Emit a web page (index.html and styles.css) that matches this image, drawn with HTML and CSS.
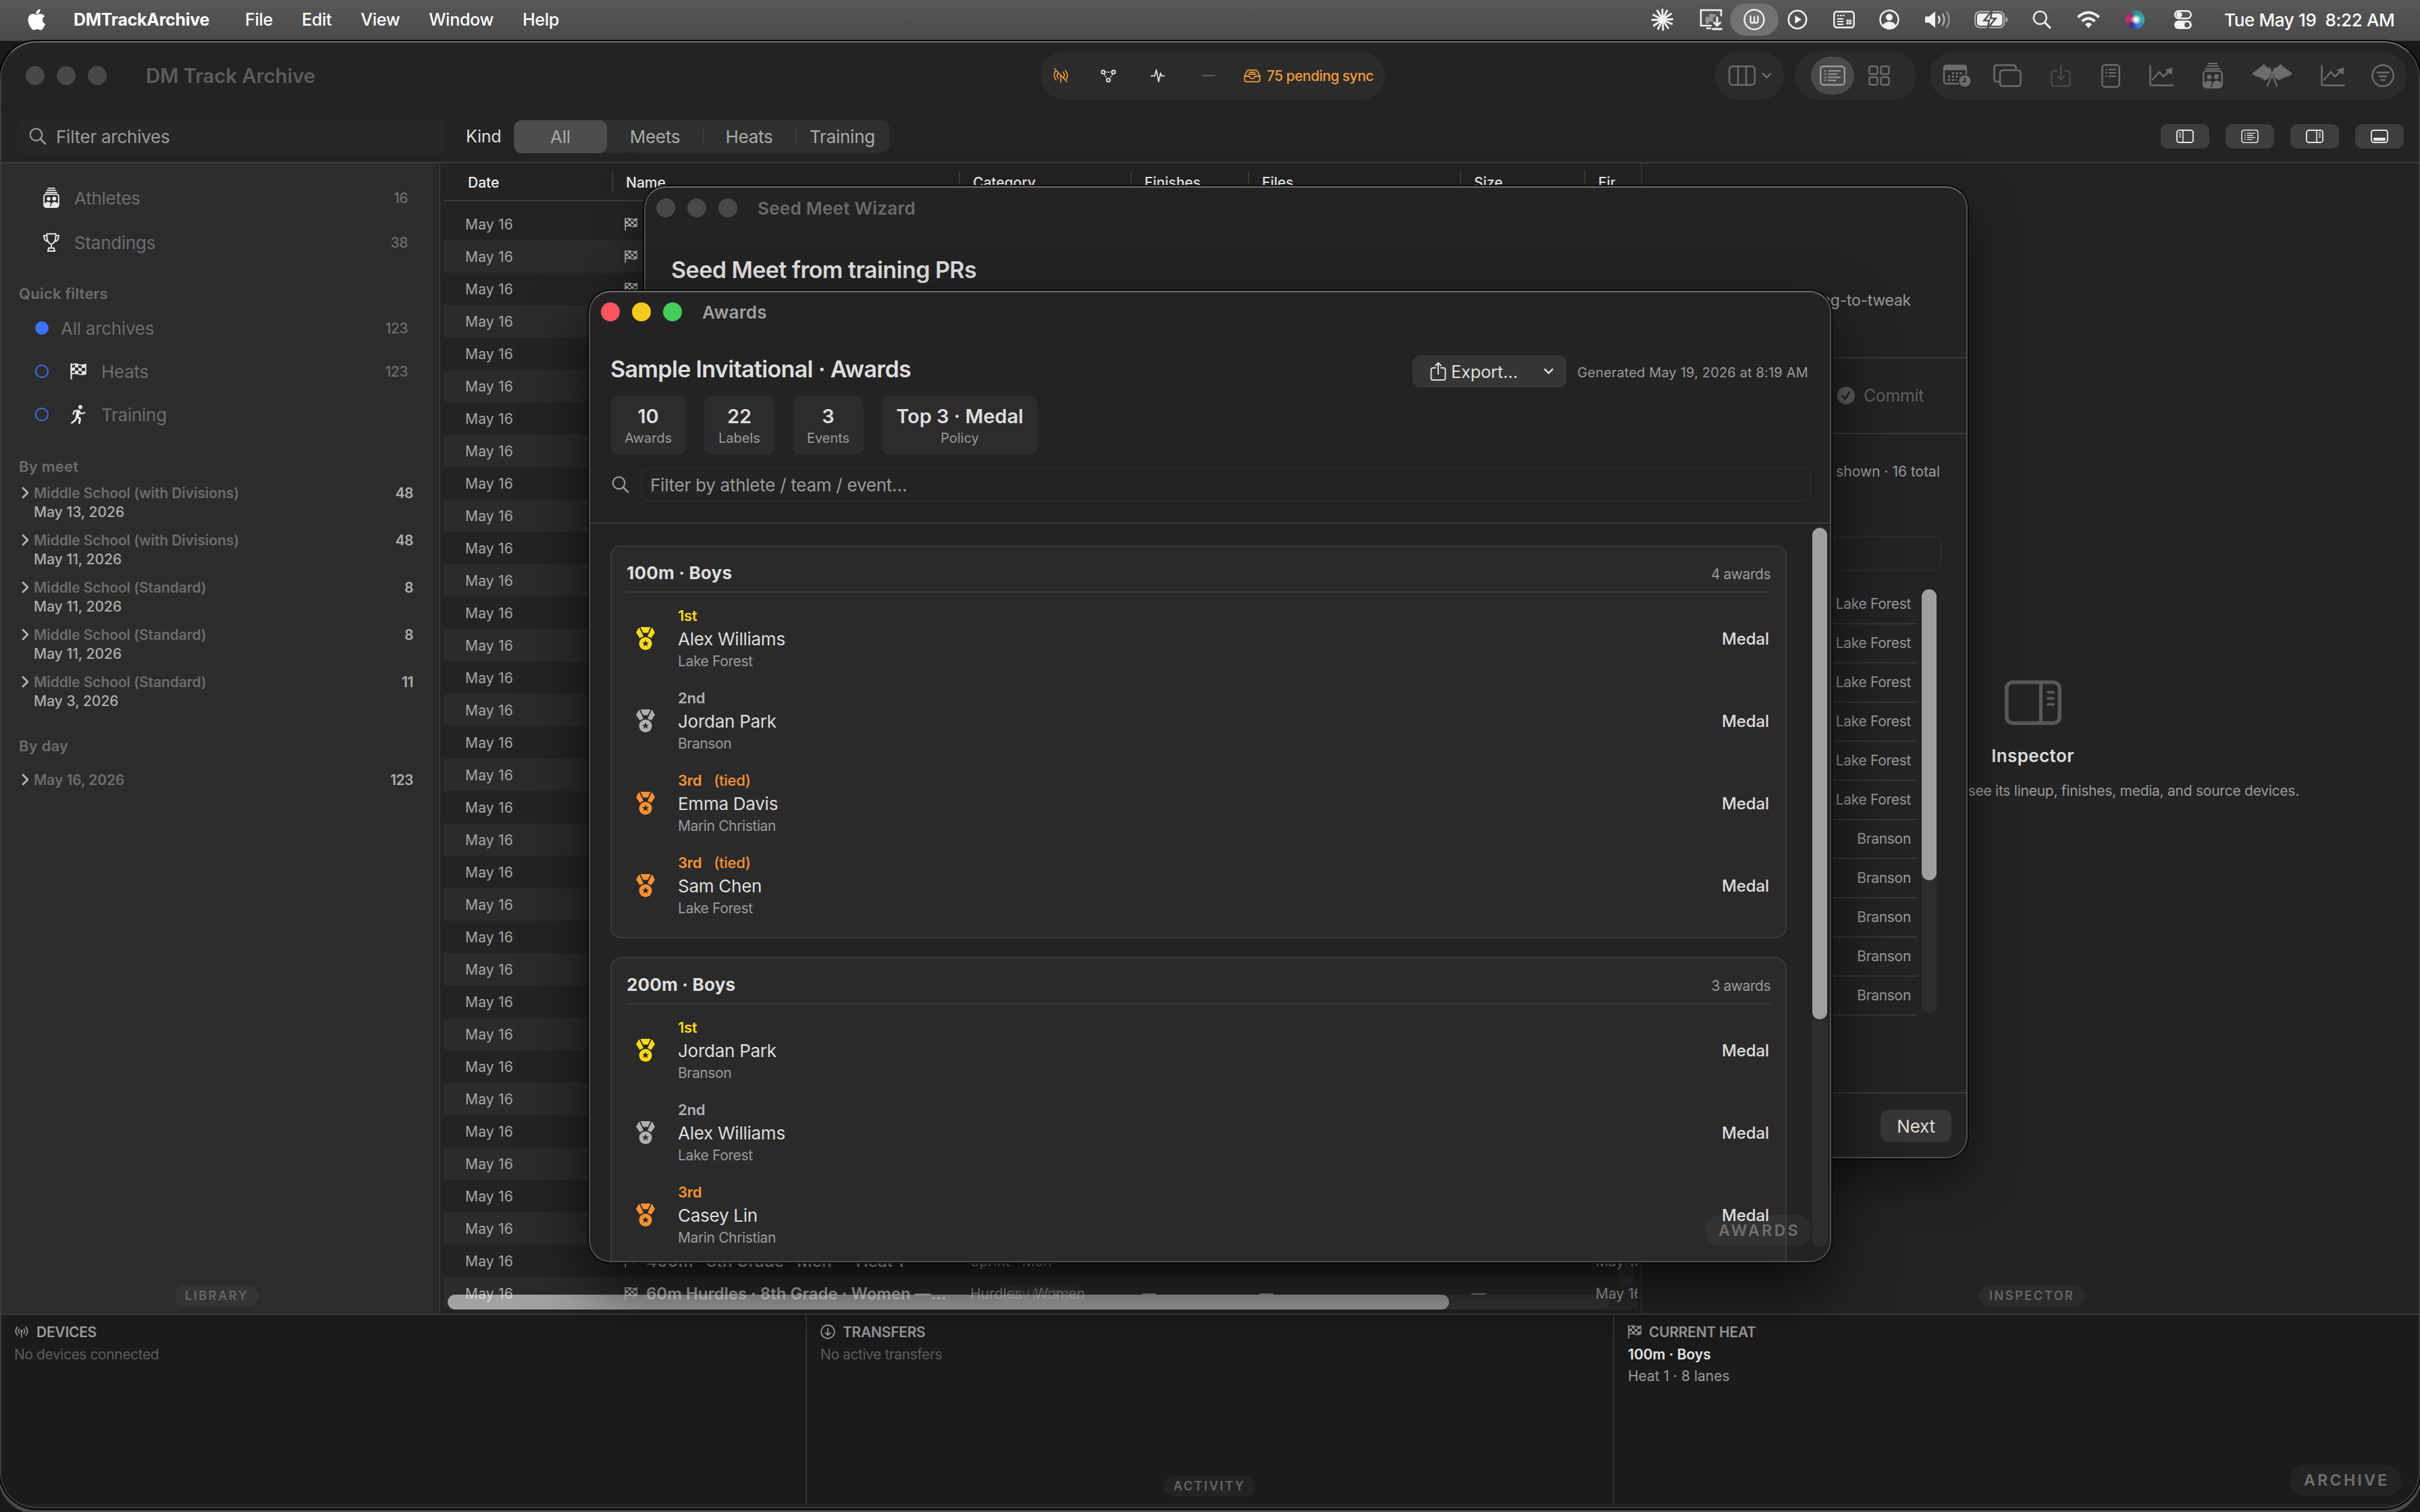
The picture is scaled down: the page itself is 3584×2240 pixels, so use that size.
FILE: index.html
```html
<!DOCTYPE html>
<html lang="en">
	<head>
		<meta charset="utf-8">
		<title>DM Track Archive</title>
		<link rel="stylesheet" href="styles.css">
	</head>
	<body>
		<svg class="defs" xmlns="http://www.w3.org/2000/svg">
			<symbol id="apple" viewBox="0 0 26 32"><path d="M18 0.5c.3 2.3-.6 4.200-1.700 5.500-1.100 1.300-2.800 2.200-4.500 2-.3-2 .6-4 1.700-5.200C14.700 1.500 16.500.6 18 .5zM24.700 11c-2 1.200-3.200 3-3.200 5.400 0 2.700 1.600 5 4.200 6-.6 1.900-1.600 3.800-2.800 5.500-1.200 1.700-2.500 3.600-4.500 3.600s-2.600-1.200-4.900-1.200c-2.200 0-3 1.200-4.900 1.200s-3.200-1.700-4.600-3.700C1.700 24.600 0 20 0 16.500c0-5.800 3.800-8.900 7.500-8.900 2 0 3.600 1.300 4.900 1.300 1.200 0 3.100-1.400 5.500-1.400 2.600 0 5.100 1.100 6.800 3.500z" fill="currentColor"/></symbol>
			<symbol id="burst" viewBox="0 0 32 32"><g stroke="currentColor" stroke-width="2.700" stroke-linecap="round"><path d="M16 16V2M16 16L22.500 3.500M16 16L28 8M16 16L30 15.500M16 16L29 22M16 16L24 28M16 16L17 30.500M16 16L10 29M16 16L4 24.500M16 16L1.800 16.500M16 16L3.500 9.500M16 16L9 3.500"/></g></symbol>
			<symbol id="display" viewBox="0 0 34 32"><g fill="none" stroke="currentColor" stroke-width="2.600" stroke-linecap="round"><path d="M32 10V2H2v23h15M11 29h5"/><path d="M26 13v11M21.500 20.500l4.500 4.500 4.500-4.500M19.500 30h13" stroke-width="3"/></g><path d="M9 12h5V8h10v4h-4v7h-6v3H9z" fill="currentColor" opacity=".4"/></symbol>
			<symbol id="wcircle" viewBox="0 0 32 32"><g fill="none" stroke="currentColor" stroke-width="2.400" stroke-linecap="round" stroke-linejoin="round"><circle cx="16" cy="16" r="14.500"/><path d="M10.500 11v7.500q0 2.500 2.700 2.500t2.800-2.500V12M16 18.500q0 2.500 2.800 2.500t2.700-2.500V11"/></g></symbol>
			<symbol id="play" viewBox="0 0 30 30"><circle cx="15" cy="15" r="13.200" fill="none" stroke="currentColor" stroke-width="2.600"/><path d="M11.500 9v12l9.500-6z" fill="currentColor"/></symbol>
			<symbol id="keys" viewBox="0 0 32 26"><rect x="1.300" y="1.300" width="29.400" height="23.400" rx="4" fill="none" stroke="currentColor" stroke-width="2.400"/><path d="M6 7h2.500M10 7h2.500M14 7h2.500M6 12h9M6 16h9M6 20h9" stroke="currentColor" stroke-width="2"/><path d="M21.500 12.500v8M25 12.500v8M19 15h8.500M19 18.500h8.500" stroke="currentColor" stroke-width="1.600"/></symbol>
			<symbol id="person" viewBox="0 0 30 30"><circle cx="15" cy="15" r="13.500" fill="none" stroke="currentColor" stroke-width="2.400"/><circle cx="15" cy="11.500" r="5" fill="currentColor"/><path d="M5 24q3-6 10-6t10 6q-4 5-10 5T5 24z" fill="currentColor"/></symbol>
			<symbol id="speaker" viewBox="0 0 40 28"><path d="M0 9.500h6L15 2v24l-9-7.500H0z" fill="currentColor"/><g fill="none" stroke="currentColor" stroke-width="2.400" stroke-linecap="round"><path d="M20 9.500q3 4.500 0 9"/><path d="M26 6q5 8 0 16" opacity=".6"/><path d="M32 2.500q7.500 11.500 0 23" opacity=".4"/></g></symbol>
			<symbol id="battery" viewBox="0 0 50 26"><rect x="1.200" y="1.200" width="43" height="23.600" rx="7" fill="none" stroke="currentColor" stroke-width="2" opacity=".6"/><rect x="4" y="4" width="37.500" height="18" rx="4.500" fill="currentColor"/><path d="M46.500 9v8q3-1 3-4t-3-4z" fill="currentColor" opacity=".6"/><path d="M26 0L14.500 14.500H22L19.500 26 31.500 11.300H24z" fill="currentColor" stroke="#515151" stroke-width="2.600"/></symbol>
			<symbol id="search" viewBox="0 0 26 26"><circle cx="10.500" cy="10.500" r="8.800" fill="none" stroke="currentColor" stroke-width="2.200"/><path d="M17 17l7 7" stroke="currentColor" stroke-width="2.800" stroke-linecap="round"/></symbol>
			<symbol id="wifi" viewBox="0 0 34 26"><g fill="none" stroke="currentColor" stroke-width="4"><path d="M1.500 9.500q15.500-14 31 0"/><path d="M7.500 15.500q9.500-8.500 19 0"/></g><path d="M12 20q5-4.500 10 0l-5 5.500z" fill="currentColor"/></symbol>
			<symbol id="control" viewBox="0 0 26 28"><rect x="1.200" y="1.200" width="23.600" height="11" rx="5.500" fill="none" stroke="currentColor" stroke-width="2.400"/><circle cx="7.500" cy="6.700" r="4.300" fill="currentColor"/><rect x="0" y="15.500" width="26" height="12.500" rx="6.200" fill="currentColor"/><circle cx="19" cy="21.700" r="3.800" fill="#515151"/></symbol>

			<symbol id="antenna" viewBox="0 0 24 20"><g fill="none" stroke="currentColor" stroke-width="1.800" stroke-linecap="round"><path d="M5 2.500q-5 6.500 0 13M19 2.500q5 6.500 0 13M8.300 5.500q-2.600 3.500 0 7M15.700 5.500q2.600 3.500 0 7M12 9v10"/></g><circle cx="12" cy="8.500" r="1.900" fill="currentColor"/></symbol>
			<symbol id="antenna-off" viewBox="0 0 24 22"><g fill="none" stroke="currentColor" stroke-width="1.700" stroke-linecap="round"><path d="M4 4.500q-4 6.500 1 13M19 3.500q5 6.500 1 13M7.500 8q-2 3.500 .8 7M15.500 6q3 3.500 1 7M12 10v11M3 1l18 19"/></g></symbol>
			<symbol id="nodes" viewBox="0 0 24 20"><g fill="none" stroke="currentColor" stroke-width="2"><circle cx="4" cy="4" r="2.700"/><circle cx="20" cy="4" r="2.700"/><circle cx="12" cy="16.500" r="2.700"/></g><path d="M8 4h8M5.500 7.500l4.500 6M18.500 7.500l-4.500 6" stroke="currentColor" stroke-width="1.800" stroke-dasharray="2 1.500"/></symbol>
			<symbol id="pulse" viewBox="0 0 22 22"><path d="M1 11.500h5.500L9 2l3.500 18.500L15.500 7l1.500 4.500h4" fill="none" stroke="currentColor" stroke-width="1.800" stroke-linejoin="round" stroke-linecap="round"/></symbol>
			<symbol id="tray" viewBox="0 0 26 20"><g fill="none" stroke="currentColor" stroke-width="1.900" stroke-linejoin="round"><path d="M1.200 10L5 2.500Q6 1 8 1h10q2 0 3 1.500L24.800 10v6q0 3-3 3H4.200q-3 0-3-3zM1.500 10.500h7.300q.6 3.800 4.200 3.800t4.200-3.800h7.300"/><path d="M8 4.500h10M6.500 7.500h13"/></g></symbol>
			<symbol id="columns" viewBox="0 0 40 30"><g fill="none" stroke="currentColor" stroke-width="2.400"><rect x="1.200" y="1.200" width="37.600" height="27.600" rx="4.500"/><path d="M14 1v28M26 1v28"/></g></symbol>
			<symbol id="chev-down" viewBox="0 0 16 10"><path d="M2 2l6 6 6-6" fill="none" stroke="currentColor" stroke-width="2.800" stroke-linecap="round" stroke-linejoin="round"/></symbol>
			<symbol id="chev-right" viewBox="0 0 11 18"><path d="M2 2l7 7-7 7" fill="none" stroke="currentColor" stroke-width="2.800" stroke-linecap="round" stroke-linejoin="round"/></symbol>
			<symbol id="list" viewBox="0 0 38 30"><rect x="1.200" y="1.200" width="35.600" height="27.600" rx="4.500" fill="none" stroke="currentColor" stroke-width="2.400"/><path d="M7 8h2.500M7 12.700h2.500M7 17.400h2.500M7 22h2.500M12.500 8H31M12.500 12.700H26M12.500 17.400H31M12.500 22H24" stroke="currentColor" stroke-width="2"/></symbol>
			<symbol id="grid" viewBox="0 0 32 30"><g fill="none" stroke="currentColor" stroke-width="2.400"><rect x="1.500" y="1.300" width="12" height="11.500" rx="2.500"/><rect x="18.500" y="1.300" width="12" height="11.500" rx="2.500"/><rect x="1.500" y="17.200" width="12" height="11.500" rx="2.500"/><rect x="18.500" y="17.200" width="12" height="11.500" rx="2.500"/></g></symbol>
			<symbol id="calendar" viewBox="0 0 42 34"><path d="M24 29H6q-4 0-4-4V6q0-4 4-4h25q4 0 4 4v9" fill="none" stroke="currentColor" stroke-width="2.400"/><path d="M1 9V5q0-4 4-4h27q4 0 4 4v4z" fill="currentColor"/><path d="M14 13.500h15M8 18.500h15M8 23.500h13" stroke="currentColor" stroke-width="2.800" stroke-dasharray="3 2.800"/><circle cx="33" cy="25" r="8.500" fill="currentColor"/><path d="M33 20v6h-4" fill="none" stroke="#2b2b2b" stroke-width="2"/></symbol>
			<symbol id="stack" viewBox="0 0 42 34"><g fill="none" stroke="currentColor" stroke-width="2.500"><path d="M9 26H5.500q-4 0-4-4V5.500q0-4 4-4h24q4 0 4 4V7"/><rect x="10" y="9" width="30.500" height="23.500" rx="4"/></g></symbol>
			<symbol id="download" viewBox="0 0 30 34"><g fill="none" stroke="currentColor" stroke-width="2.500" stroke-linecap="round"><path d="M9 10H5.500q-4 0-4 4v14.500q0 4 4 4h19q4 0 4-4V14q0-4-4-4H21M15 1.500v21M10 18l5 5 5-5"/></g></symbol>
			<symbol id="doc" viewBox="0 0 28 35"><rect x="1.300" y="1.300" width="25.400" height="32.400" rx="4.500" fill="none" stroke="currentColor" stroke-width="2.500"/><path d="M6 8h2.500M6 13h2.500M6 18h2.500M11 8h11M11 13h11M11 18h11" stroke="currentColor" stroke-width="2"/></symbol>
			<symbol id="chart" viewBox="0 0 36 32"><g fill="none" stroke="currentColor" stroke-width="2.500" stroke-linecap="round" stroke-linejoin="round"><path d="M1.500 1.500v27q0 2 2 2h31M5 22l10-11.500 6 7L31 8"/></g><path d="M23.500 7.500L34.500 4l-1 11z" fill="currentColor"/></symbol>
			<symbol id="athletes" viewBox="0 0 30 38"><path d="M9 1.200h12M7 5h16M4.500 9h21" stroke="currentColor" stroke-width="2.200" stroke-linecap="round"/><rect x="1.300" y="12.300" width="27.400" height="24.400" rx="4.500" fill="none" stroke="currentColor" stroke-width="2.500"/><circle cx="10" cy="21" r="3.500" fill="currentColor"/><circle cx="20.500" cy="20.500" r="3.700" fill="currentColor"/><path d="M2 36v-5q2-4 7-4.500 3 0 5 2l-2 8zM14 37q0-10 7-10.500 4 0 7.500 4V33q0 4-4 4z" fill="currentColor"/></symbol>
			<symbol id="flags" viewBox="0 0 60 34"><path d="M0 14L18 0l2.500 3q3 2.500 7 3l1 2-1.500 10q-2 4-8 6-3-3-9-5Q4 18 0 14zM60 14L42 0l-2.500 3q-3 2.500-7 3l-1 2L33 18q2 4 8 6 3-3 9-5 6-1 10-5z" fill="currentColor"/><path d="M27.500 10L37.500 33M32.500 10L22.500 33" stroke="currentColor" stroke-width="2.400"/></symbol>
			<symbol id="filter" viewBox="0 0 34 34"><circle cx="17" cy="17" r="15.600" fill="none" stroke="currentColor" stroke-width="2.500"/><path d="M8.500 12.500h17M11.500 18h11M14.500 23.500h5" stroke="currentColor" stroke-width="2.400" stroke-linecap="round"/></symbol>
			<symbol id="side-left" viewBox="0 0 26 20"><rect x="1" y="1" width="24" height="18" rx="3.500" fill="none" stroke="currentColor" stroke-width="1.900"/><path d="M10 1v18M4 5h3M4 8h3M4 11h3" stroke="currentColor" stroke-width="1.700"/></symbol>
			<symbol id="side-right" viewBox="0 0 26 20"><rect x="1" y="1" width="24" height="18" rx="3.500" fill="none" stroke="currentColor" stroke-width="1.900"/><path d="M16 1v18M19 5h3M19 8h3M19 11h3" stroke="currentColor" stroke-width="1.700"/></symbol>
			<symbol id="panel-bottom" viewBox="0 0 26 20"><rect x="1" y="1" width="24" height="18" rx="3.500" fill="none" stroke="currentColor" stroke-width="1.900"/><rect x="4" y="12" width="18" height="4.500" rx="1" fill="currentColor"/></symbol>
			<symbol id="trophy" viewBox="0 0 26 28"><g fill="none" stroke="currentColor" stroke-width="2"><path d="M6.500 1.500h13q.5 7-1.500 11-2 3.500-5 4.500-3-1-5-4.500-2-4-1.500-11zM6.500 4H2q0 8 6.500 9M19.500 4H24q0 8-6.500 9M13 17v5.500M8 27l1-4.500h8l1 4.500z"/></g></symbol>
			<symbol id="flag" viewBox="0 0 24 24"><path d="M1.500 1v22.500" stroke="currentColor" stroke-width="2" stroke-linecap="round"/><path d="M1.500 3q5-3 10.500-1t11-.3V16q-5.500 2-11 0T1.500 16.500z" fill="none" stroke="currentColor" stroke-width="1.700"/><path d="M7 2l5 .6v4.200l-5-.8zM17 3l5-1v4.400l-5 1zM2 7l5-1v4.800l-5 1zM12 6.800l5 .6v4.800l-5-.8zM7 10.800l5 .6v4.600l-5-.9zM17 12.200l5-1V16l-5 .8z" fill="currentColor"/></symbol>
			<symbol id="runner" viewBox="0 0 22 28"><circle cx="14" cy="3" r="2.900" fill="currentColor"/><g fill="none" stroke="currentColor" stroke-linecap="round" stroke-linejoin="round"><path d="M11.500 9.500L8.500 16.500l5 4-1 6" stroke-width="3"/><path d="M8.500 18l-2 4.500-5 4" stroke-width="2.800"/><path d="M3.500 13.500L5 8.800l6-.8 4 5 5.500-1.500" stroke-width="2.200"/></g><path d="M8 8.500l6-.5-2 8-4.500 1z" fill="currentColor"/></symbol>
			<symbol id="down-circle" viewBox="0 0 22 22"><g fill="none" stroke="currentColor" stroke-width="1.800" stroke-linecap="round"><circle cx="11" cy="11" r="9.800"/><path d="M11 6v9.500M7.500 12.500l3.500 3.500 3.500-3.500"/></g></symbol>
			<symbol id="inspector" viewBox="0 0 84 66"><g fill="none" stroke="currentColor"><rect x="2.800" y="2.800" width="78.400" height="60.400" rx="9" stroke-width="5.600"/><path d="M53.500 3v60" stroke-width="5"/><path d="M64 17.500h8M64 26.500h8M64 35.500h8" stroke-width="4" stroke-linecap="round"/></g></symbol>
			<symbol id="check" viewBox="0 0 26 26"><circle cx="13" cy="13" r="13" fill="currentColor"/><path d="M7.500 13.500l4 4.500L18 8" fill="none" stroke="#222" stroke-width="2.600" stroke-linecap="round" stroke-linejoin="round"/></symbol>
			<symbol id="share" viewBox="0 0 24 28"><g fill="none" stroke="currentColor" stroke-width="2" stroke-linecap="round" stroke-linejoin="round"><path d="M8 9H4.500Q1.500 9 1.500 12v12q0 3 3 3h15q3 0 3-3V12q0-3-3-3H16M12 18V2M8 5.500L12 1.500l4 4"/></g></symbol>
			<symbol id="medal" viewBox="0 0 28 34"><path d="M6.500 0h15L17.500 8.500h-7zM4.300.8L0 8l5.500 8.300 5.500-2.500L5 1.200zM23.700.8L28 8l-5.500 8.300-5.500-2.500L23 1.200z" fill="currentColor"/><circle cx="14" cy="24.500" r="9.500" fill="currentColor"/><path d="M14 19.200l1.400 3.500h3.700l-2.900 2.300 1.100 3.800-3.300-2.200-3.300 2.200 1.100-3.800-2.900-2.300h3.700z" fill="#2a2a2a"/></symbol>
		</svg>

		<nav class="menubar">
			<svg class="apple"><use href="#apple"/></svg>
			<b>DMTrackArchive</b>
			<span>File</span><span>Edit</span><span>View</span><span>Window</span><span>Help</span>
			<div class="status">
				<svg width="34" height="34"><use href="#burst"/></svg>
				<svg width="34" height="32"><use href="#display"/></svg>
				<i class="active"><svg width="32" height="32"><use href="#wcircle"/></svg></i>
				<svg width="30" height="30"><use href="#play"/></svg>
				<svg width="32" height="26"><use href="#keys"/></svg>
				<svg width="30" height="30"><use href="#person"/></svg>
				<svg width="40" height="28"><use href="#speaker"/></svg>
				<svg width="50" height="26"><use href="#battery"/></svg>
				<svg width="28" height="28"><use href="#search"/></svg>
				<svg width="34" height="26"><use href="#wifi"/></svg>
				<i class="siri"></i>
				<svg width="26" height="28"><use href="#control"/></svg>
			</div>
			<time>Tue May 19&nbsp; 8:22 AM</time>
		</nav>

		<div class="window main">
			<header class="titlebar">
				<div class="lead">
					<div class="lights"><i></i><i></i><i></i></div>
					<h1>DM Track Archive</h1>
				</div>
				<div class="pill sync">
					<svg class="orange" width="24" height="22"><use href="#antenna-off"/></svg>
					<svg width="23" height="19"><use href="#nodes"/></svg>
					<svg width="21" height="22"><use href="#pulse"/></svg>
					<i class="dash"></i>
					<svg class="orange" width="25" height="19"><use href="#tray"/></svg>
					<span class="orange">75 pending sync</span>
				</div>
				<div class="tools">
					<div class="pill layout">
						<svg width="40" height="30"><use href="#columns"/></svg>
						<svg width="15" height="10"><use href="#chev-down"/></svg>
					</div>
					<div class="pill views">
						<i class="on"><svg width="38" height="30"><use href="#list"/></svg></i>
						<svg width="32" height="30"><use href="#grid"/></svg>
					</div>
					<div class="pill actions">
						<svg width="42" height="34"><use href="#calendar"/></svg>
						<svg width="42" height="34"><use href="#stack"/></svg>
						<svg class="dim" width="30" height="34"><use href="#download"/></svg>
						<svg width="28" height="35"><use href="#doc"/></svg>
						<svg width="36" height="32"><use href="#chart"/></svg>
						<svg width="30" height="38"><use href="#athletes"/></svg>
						<svg width="60" height="34"><use href="#flags"/></svg>
						<svg width="36" height="32"><use href="#chart"/></svg>
						<svg width="34" height="34"><use href="#filter"/></svg>
					</div>
				</div>
			</header>

			<div class="filterbar">
				<div class="field"><svg width="26" height="26"><use href="#search"/></svg>Filter archives</div>
				<label>Kind</label>
				<div class="segmented"><span class="on">All</span><span>Meets</span><span>Heats</span><span>Training</span></div>
				<div class="panels">
					<button><svg width="26" height="20"><use href="#side-left"/></svg></button>
					<button><svg width="26" height="20"><use href="#list"/></svg></button>
					<button><svg width="26" height="20"><use href="#side-right"/></svg></button>
					<button><svg width="26" height="20"><use href="#panel-bottom"/></svg></button>
				</div>
			</div>

			<div class="content">
				<aside class="sidebar">
					<div class="nav"><svg width="24" height="30"><use href="#athletes"/></svg><span>Athletes</span><em>16</em></div>
					<div class="nav"><svg width="26" height="28"><use href="#trophy"/></svg><span>Standings</span><em>38</em></div>
					<h4>Quick filters</h4>
					<div class="quick"><i class="dot on"></i><span>All archives</span><em>123</em></div>
					<div class="quick"><i class="dot"></i><svg width="24" height="24"><use href="#flag"/></svg><span>Heats</span><em>123</em></div>
					<div class="quick"><i class="dot"></i><svg width="22" height="28"><use href="#runner"/></svg><span>Training</span></div>
					<h4>By meet</h4>
					<div class="meet"><svg><use href="#chev-right"/></svg><p>Middle School (with Divisions)<b>May 13, 2026</b></p><em>48</em></div>
					<div class="meet"><svg><use href="#chev-right"/></svg><p>Middle School (with Divisions)<b>May 11, 2026</b></p><em>48</em></div>
					<div class="meet"><svg><use href="#chev-right"/></svg><p>Middle School (Standard)<b>May 11, 2026</b></p><em>8</em></div>
					<div class="meet"><svg><use href="#chev-right"/></svg><p>Middle School (Standard)<b>May 11, 2026</b></p><em>8</em></div>
					<div class="meet"><svg><use href="#chev-right"/></svg><p>Middle School (Standard)<b>May 3, 2026</b></p><em>11</em></div>
					<h4>By day</h4>
					<div class="meet day"><svg><use href="#chev-right"/></svg><p>May 16, 2026</p><em>123</em></div>
					<span class="tag">LIBRARY</span>
				</aside>

				<section class="table">
					<div class="thead"><span>Date</span><span>Name</span><span>Category</span><span>Finishes</span><span>Files</span><span>Size</span><span>Finished</span></div>
					<div class="rows" id="rows"></div>
					<span class="tag events">EVENTS</span>
					<i class="vtrack"></i>
					<i class="htrack"><i></i></i>
				</section>

				<section class="inspector">
					<svg width="84" height="66"><use href="#inspector"/></svg>
					<h3>Inspector</h3>
					<p>Select an archive from the list to see its lineup, finishes, media, and source devices.</p>
					<span class="tag">INSPECTOR</span>
				</section>
			</div>

			<footer class="activity">
				<div>
					<h5><svg width="22" height="20"><use href="#antenna"/></svg>DEVICES</h5>
					<p>No devices connected</p>
				</div>
				<div>
					<h5><svg width="22" height="22"><use href="#down-circle"/></svg>TRANSFERS</h5>
					<p>No active transfers</p>
				</div>
				<div>
					<h5><svg width="20" height="20"><use href="#flag"/></svg>CURRENT HEAT</h5>
					<p class="heat">100m · Boys</p>
					<p class="lanes">Heat 1 · 8 lanes</p>
				</div>
				<span class="tag activity-tag">ACTIVITY</span>
				<span class="tag big archive-tag">ARCHIVE</span>
			</footer>
		</div>

		<div class="window seed">
			<header><div class="lights"><i></i><i></i><i></i></div><h2>Seed Meet Wizard</h2></header>
			<div class="intro">
				<h1>Seed Meet from training PRs</h1>
				<p>Build a seeded meet from training results, ready for long-to-tweak</p>
			</div>
			<div class="steps"><svg width="26" height="26"><use href="#check"/></svg>Commit</div>
			<div class="pick">
				<p>16 shown · 16 total</p>
				<div class="box"></div>
				<div class="list">
					<ul>
						<li>Lake Forest</li><li>Lake Forest</li><li>Lake Forest</li><li>Lake Forest</li><li>Lake Forest</li><li>Lake Forest</li>
						<li>Branson</li><li>Branson</li><li>Branson</li><li>Branson</li><li>Branson</li>
					</ul>
					<i class="scroll"><i></i></i>
				</div>
			</div>
			<footer><button>Next</button></footer>
		</div>

		<div class="window awards">
			<header><div class="lights live"><i></i><i></i><i></i></div><h2>Awards</h2></header>
			<div class="summary">
				<div class="head">
					<h1>Sample Invitational · Awards</h1>
					<button><svg width="24" height="28"><use href="#share"/></svg><span>Export…</span><svg width="15" height="10"><use href="#chev-down"/></svg></button>
					<small>Generated May 19, 2026 at 8:19 AM</small>
				</div>
				<div class="stats">
					<div><b>10</b>Awards</div>
					<div><b>22</b>Labels</div>
					<div><b>3</b>Events</div>
					<div><b>Top 3 · Medal</b>Policy</div>
				</div>
				<div class="find"><svg width="26" height="26"><use href="#search"/></svg><div class="box">Filter by athlete / team / event…</div></div>
			</div>
			<div class="results">
				<div class="groups">
					<article>
						<h3>100m · Boys<small>4 awards</small></h3>
						<div class="award gold"><svg><use href="#medal"/></svg><p><b>1st</b><span>Alex Williams</span><small>Lake Forest</small></p><em>Medal</em></div>
						<div class="award silver"><svg><use href="#medal"/></svg><p><b>2nd</b><span>Jordan Park</span><small>Branson</small></p><em>Medal</em></div>
						<div class="award bronze"><svg><use href="#medal"/></svg><p><b>3rd<i>(tied)</i></b><span>Emma Davis</span><small>Marin Christian</small></p><em>Medal</em></div>
						<div class="award bronze"><svg><use href="#medal"/></svg><p><b>3rd<i>(tied)</i></b><span>Sam Chen</span><small>Lake Forest</small></p><em>Medal</em></div>
					</article>
					<article>
						<h3>200m · Boys<small>3 awards</small></h3>
						<div class="award gold"><svg><use href="#medal"/></svg><p><b>1st</b><span>Jordan Park</span><small>Branson</small></p><em>Medal</em></div>
						<div class="award silver"><svg><use href="#medal"/></svg><p><b>2nd</b><span>Alex Williams</span><small>Lake Forest</small></p><em>Medal</em></div>
						<div class="award bronze"><svg><use href="#medal"/></svg><p><b>3rd</b><span>Casey Lin</span><small>Marin Christian</small></p><em>Medal</em></div>
					</article>
				</div>
				<i class="scroll"><i></i></i>
			</div>
			<span class="tag big">AWARDS</span>
		</div>

		<script>
const rows = []
for(let i = 0; i < 32; i++) rows.push(['', '', ''])
rows.push(['400m · 8th Grade · Men — Heat 1', 'Sprint · Men', '—'])
rows.push(['60m Hurdles · 8th Grade · Women —…', 'Hurdles · Women', '—'])
document.getElementById('rows').innerHTML = rows.map(([name, category, n]) =>
	`<div class="row"><span>May 16</span><span class="name"><svg><use href="#flag"/></svg>${name}</span><span>${category}</span><span>${n}</span><span>${n}</span><span>${n}</span><span class="fin">${n && 'May 16'}</span></div>`
).join('')
		</script>
	</body>
</html>
```

FILE: styles.css
```css
:root {
	--bg: #232323;
	--panel: #2c2c2c;
	--line: #3a3a3a;
	--text: #dedede;
	--muted: #9a9a9a;
	--dim: #6c6c6c;
	--orange: #f39a38;
}
* {box-sizing: border-box; margin: 0; padding: 0;}
i, em {font-style: normal;}
svg {display: block; flex: none;}
body {
	width: 3584px;
	height: 2240px;
	overflow: hidden;
	position: relative;
	background: linear-gradient(#585858, #4a4a4a 60px, #191919 61px);
	font-family: Inter, "Liberation Sans", sans-serif;
	font-size: 26px;
	letter-spacing: -0.01em;
	color: var(--text);
}
button {font: inherit; letter-spacing: inherit; color: inherit; border: 0;}
.defs {position: absolute; width: 0; height: 0;}
.orange {color: var(--orange);}

/* menu bar */
.menubar {display: flex; align-items: center; height: 60px; padding: 0 38px 2px 41px; font-size: 25px; color: #fff; font-weight: 500; white-space: nowrap;}
.menubar .apple {width: 27px; height: 32px; margin-right: 41px;}
.menubar b {width: 211px; margin-right: 43px; font-weight: 700;}
.menubar > span {margin-right: 43px;}
.menubar time {width: 252px; text-align: right; font-size: 26px; letter-spacing: -0.014em; font-weight: 500;}
.status {display: flex; align-items: center; margin-left: auto; margin-right: 48px; color: #f2f2f2;}
.status > * {margin-left: 38px;}
.status > :nth-child(3) {margin-left: 11px;}
.status > :nth-child(4) {margin-left: 13px;}
.status > :nth-child(6) {margin-left: 36px;}
.status > :nth-child(8) {margin-left: 33px;}
.status > :nth-child(9) {margin-left: 36px;}
.status > :nth-child(12) {margin-left: 44px;}
.status .active {display: flex; align-items: center; justify-content: center; width: 72px; height: 48px; border-radius: 24px; background: #717171;}
.siri {width: 28px; height: 28px; border-radius: 50%; background: radial-gradient(circle at 55% 50%, #fff 8%, transparent 38%), conic-gradient(#2f8f8a, #35b0a0 90deg, #3d6fe0 160deg, #27356e 210deg, #e0306a 270deg, #7a3a6a 320deg, #2f8f8a);}

/* windows */
.window {position: absolute; display: flex; flex-direction: column; background: var(--bg); border: 2px solid #4e4e4e; border-top-color: #6b6b6b; overflow: hidden;}
.window.main {left: 0; top: 61px; width: 3584px; height: 2174px; border-radius: 54px; border-color: #6b6b6b #3c3c3c #3c3c3c; box-shadow: 0 0 0 2px #000, 0 5px 0 3px #4a4a4a;}
.window.seed {left: 954px; top: 276px; width: 1960px; height: 1440px; border-radius: 32px; box-shadow: 0 0 0 2px #0a0a0a, 0 30px 70px rgba(0, 0, 0, .5);}
.window.awards {left: 872px; top: 431px; width: 1840px; height: 1439px; border-radius: 32px; box-shadow: 0 0 0 2px #0a0a0a, 0 40px 90px rgba(0, 0, 0, .65);}
.lights {display: flex; gap: 18px;}
.lights i {width: 28px; height: 28px; border-radius: 50%; background: #484848; border: 1px solid #505050;}
.lights.live i {border: 0; background: #fc5560;}
.lights.live i:nth-child(2) {background: #f5ca1e;}
.lights.live i:nth-child(3) {background: #45cc59;}
.seed > header, .awards > header {display: flex; align-items: center; gap: 30px; height: 60px; padding-left: 16px; flex: none;}
.window h2 {font-size: 26px; font-weight: 600; letter-spacing: 0.01em; color: #6a6a6a;}
.tag {position: absolute; padding: 0 15px; height: 30px; line-height: 30px; border-radius: 14px; background: rgba(255, 255, 255, .04); font-size: 18px; font-weight: 600; letter-spacing: 2.6px; color: #666;}
.tag.big {height: 46px; line-height: 46px; padding: 0 17px 0 20px; border-radius: 22px; font-size: 23px; letter-spacing: 3.400px; color: #707070;}

/* title bar */
.titlebar {display: grid; grid-template-columns: 1539px 510px 1fr; align-items: center; height: 100px; padding-bottom: 2px; flex: none;}
.lead {display: flex; align-items: center; padding-left: 36px;}
.lead h1 {margin-left: 58px; font-size: 29.500px; font-weight: 600; letter-spacing: -0.005em; color: #5c5c5c;}
.pill {display: flex; align-items: center; height: 72px; border-radius: 36px; background: #2b2b2b; color: #6c6c6c;}
.sync {padding-left: 18px; color: #e6e6e6; font-size: 21px; font-weight: 500; letter-spacing: -0.025em; white-space: nowrap;}
.sync svg:nth-child(2) {margin-left: 47px;}
.sync svg:nth-child(3) {margin-left: 51px;}
.sync .dash {width: 20px; height: 2px; margin: 0 42px 0 55px; background: #5c5c5c;}
.sync span {margin-left: 9px;}
.tools {display: flex; justify-content: flex-end; padding-right: 18px;}
.layout {width: 102px; padding-left: 20px; gap: 9px;}
.views {width: 180px; margin: 0 20px 0 16px; padding-left: 24px; gap: 21px;}
.views .on {display: flex; align-items: center; justify-content: center; width: 64px; height: 56px; border-radius: 28px; background: #4a4a4a; color: #9a9a9a;}
.actions {width: 706px; gap: 43px; padding-left: 19px;}
.actions svg:nth-child(2) {margin-left: -10px;}
.actions svg:nth-child(4) {margin-left: 2px;}
.actions svg:nth-child(8) {margin-left: -1px;}
.actions svg:nth-child(9) {margin-left: -4px;}
.actions .dim {color: #484848;}

/* filter bar */
.filterbar {display: flex; align-items: center; height: 79px; padding: 0 22px; border-bottom: 2px solid var(--line); border-top: 1px solid #202020; flex: none;}
.field {display: flex; align-items: center; gap: 14px; width: 635px; height: 52px; padding-left: 19px; border-radius: 12px; background: #272727; color: var(--muted);}
.filterbar label {width: 71px; margin-left: 31px; font-size: 25px;}
.segmented {display: grid; grid-template-columns: 138px 142px 137px 139px; height: 48px; line-height: 49px; border-radius: 12px; background: #2f2f2f; text-align: center; color: #aaa;}
.segmented .on {background: #4d4d4d; border-radius: 12px;}
.segmented span + span + span {background: linear-gradient(#3c3c3c, #3c3c3c) 0 50% / 2px 24px no-repeat;}
.panels {display: flex; gap: 24px; margin-left: auto;}
.panels button {display: flex; align-items: center; justify-content: center; width: 72px; height: 36px; border-radius: 10px; background: #3e3e3e; color: #e4e4e4;}

.content {display: grid; grid-template-columns: 648px 1782px 1fr; height: 1704px; flex: none;}

/* sidebar */
.sidebar {position: relative; padding-top: 18px; background: var(--panel); border-right: 5px solid #262626; color: var(--dim); white-space: nowrap;}
.sidebar em {margin-left: auto; font-size: 21px; font-weight: 500; letter-spacing: -0.02em;}
.sidebar h4 {height: 38px; line-height: 38px; margin-top: 26px; padding-left: 26px; font-size: 22px; font-weight: 600; letter-spacing: 0.01em;}
.nav {display: flex; align-items: center; height: 66px; padding: 0 41px 0 61px;}
.nav svg {color: #e8e8e8; width: 26px; margin-right: 21px;}
.nav + h4 {margin-top: 24px;}
.quick {display: flex; align-items: center; height: 64px; padding: 0 41px 0 50px;}
.quick svg {margin-left: 32px; width: 24px; color: #e8e8e8;}
.quick span {margin-left: 18px;}
.quick svg + span {margin-left: 22px;}
.dot {width: 20px; height: 20px; border-radius: 50%; border: 2px solid #3a6fee;}
.dot.on {background: #3974fb;}
.meet {display: flex; height: 70px; padding: 7px 33px 0 30px; font-size: 21px; line-height: 28px; font-weight: 600; letter-spacing: -0.004em;}
.meet svg {width: 11px; height: 18px; margin: 4px 7px 0 0; color: #b4b4b4;}
.meet b {display: block; font-weight: 500; color: #adadad; letter-spacing: 0;}
.meet em {color: #adadad; font-weight: 600;}
.meet.day {padding-top: 18px;}
.sidebar .tag {left: 257px; top: 1663px; background: #343434;}

/* event table */
.table {position: relative; padding: 0 5px; border-left: 2px solid #383838; border-right: 2px solid #333; overflow: hidden;}
.thead, .row {display: grid; grid-template-columns: 249px 514px 254px 174px 314px 184px 79px; align-items: center; font-size: 21px; white-space: nowrap; overflow: hidden; letter-spacing: 0;}
.thead {height: 56px; border-bottom: 2px solid var(--line); color: #f0f0f0; font-weight: 500;}
.thead span {height: 32px; line-height: 35px; padding-left: 19px; border-left: 2px solid #3a3a3a;}
.thead span:first-child {padding-left: 36px; border: 0;}
.thead span:last-child {width: 46px; overflow: hidden;}
.rows {padding-top: 10px;}
.row {height: 48px; color: #8c8c8c;}
.row:nth-child(even) {background: #2b2b2b;}
.row > span {padding-left: 17px;}
.row > span:first-child {padding-left: 32px; color: #a6a6a6; letter-spacing: 0.01em;}
.row .name {display: flex; align-items: center; padding-left: 19px; font-size: 24px; font-weight: 600; color: #b4b4b4;}
.row .name svg {width: 19px; height: 20px; margin-right: 13px;}
.row .fin {width: 79px; overflow: hidden; color: #a6a6a6;}
.events {left: 832px; top: 1662px; color: #555;}
.vtrack {position: absolute; left: 1745px; top: 60px; width: 22px; height: 1604px; border-radius: 11px; background: rgba(255, 255, 255, .05);}
.htrack {position: absolute; left: 11px; top: 1676px; width: 1722px; height: 22px; border-radius: 11px; background: rgba(255, 255, 255, .05);}
.htrack i {display: block; width: 1483px; height: 22px; border-radius: 11px; background: rgba(255, 255, 255, .54);}

/* inspector */
.inspector {position: relative; display: flex; flex-direction: column; align-items: center; padding: 766px 0 0 7px; color: #585858;}
.inspector h3 {margin-top: 30px; height: 32px; line-height: 32px; font-size: 26px; font-weight: 600; letter-spacing: 0.015em; color: var(--text);}
.inspector p {align-self: flex-end; margin: 20px 177px 0 0; line-height: 32px; font-size: 21px; letter-spacing: -0.012em; white-space: nowrap; color: var(--muted);}
.inspector .tag {left: 499px; top: 1663px;}

/* bottom strip */
.activity {position: relative; display: grid; grid-template-columns: 1193px 1196px 1fr; height: 282px; border-top: 2px solid var(--line); background: #1b1b1b; flex: none;}
.activity div {padding: 9px 19px; font-size: 21px; border-right: 2px solid #333; color: #5c5c5c;}
.activity div + div {padding-left: 20px;}
.activity div:last-of-type {border: 0;}
.activity h5 {display: flex; align-items: center; gap: 11px; height: 32px; font-size: 21px; font-weight: 600; color: #9a9a9a;}
.activity p {height: 32px; line-height: 36px; letter-spacing: -0.02em;}
.activity .heat {font-weight: 600; letter-spacing: 0; color: #e6e6e6;}
.activity .lanes {letter-spacing: 0; color: #9a9a9a;}
.activity-tag {left: 1721px; top: 239px;}
.archive-tag {left: 3390px; top: 222px;}

/* seed meet wizard */
.intro {height: 193px; padding: 37px 82px 0 38px; border-bottom: 2px solid #383838; flex: none;}
.intro h1, .head h1 {font-size: 34px; line-height: 50px; font-weight: 600; letter-spacing: -0.016em;}
.intro p {line-height: 40px; font-size: 23px; text-align: right; color: var(--muted);}
.steps {display: flex; align-items: center; justify-content: flex-end; gap: 13px; height: 112px; padding-right: 63px; border-bottom: 2px solid #383838; font-size: 25px; letter-spacing: -0.015em; color: #5e5e5e; flex: none;}
.pick {height: 975px; padding: 36px 36px 0 38px; flex: none;}
.pick p {margin-right: 3px; line-height: 40px; font-size: 21px; letter-spacing: 0; text-align: right; color: var(--muted);}
.box {border: 2px solid #2b2b2b; border-radius: 12px;}
.pick .box {height: 52px; margin-top: 75px;}
.list {display: flex; gap: 6px; margin: 21px 8px 0 0;}
.list ul {flex: 1; list-style: none;}
.list li {height: 58px; line-height: 56px; padding-right: 10px; border-bottom: 2px solid #363636; text-align: right; font-size: 21px; letter-spacing: -0.015em; color: var(--muted);}
.scroll {display: block; width: 22px; border-radius: 11px; background: #2d2d2d;}
.scroll i {display: block; border-radius: 11px; background: #a0a0a0;}
.list .scroll {height: 628px; margin-top: 6px;}
.list .scroll i {height: 431px;}
.seed footer {display: flex; justify-content: flex-end; padding: 24px 22px; border-top: 2px solid #383838;}
.seed footer button {width: 105px; height: 48px; border-radius: 12px; background: #363636;}

/* awards */
.awards > header {height: 58px;}
.awards h2 {color: #a0a0a0;}
.summary {height: 285px; padding: 35px 30px 0; border-bottom: 2px solid var(--line); flex: none;}
.head {display: flex; align-items: center; height: 48px;}
.head h1 {padding-bottom: 6px; letter-spacing: -0.019em;}
.head button {display: flex; align-items: center; width: 228px; height: 48px; margin-left: auto; padding: 0 19px 0 26px; border-radius: 12px; background: #353535;}
.head button span {margin: 0 auto 0 7px; font-size: 25.500px;}
.head small {width: 342px; margin: 3px 2px 0 16px; font-size: 20px; letter-spacing: 0.008em; white-space: nowrap; color: var(--muted);}
.stats {display: flex; gap: 27px; margin-top: 12px;}
.stats div {height: 88px; padding: 14px 21px 0; border-radius: 12px; background: var(--panel); text-align: center; font-size: 20px; line-height: 30px; letter-spacing: 0; color: var(--muted);}
.stats b {display: block; font-size: 29px; line-height: 34px; font-weight: 600; color: var(--text);}
.find {display: flex; align-items: center; gap: 17px; margin-top: 19px; padding-left: 2px; color: var(--muted);}
.find .box {flex: 1; height: 50px; line-height: 47px; padding-left: 12px; margin-right: -2px; letter-spacing: -0.01em;}
.results {position: relative; display: flex; flex: 1; min-height: 0; padding: 32px 4px 0 30px; overflow: hidden;}
.groups {width: 1742px;}
article {height: 582px; margin-bottom: 28px; padding: 0 22px; border: 2px solid var(--line); border-radius: 16px; background: #2a2a2a;}
article h3 {display: flex; align-items: center; justify-content: space-between; height: 68px; margin-bottom: 7px; padding-top: 11px; border-bottom: 2px solid var(--line); font-size: 26px; font-weight: 700; letter-spacing: 0.008em;}
article h3 small {margin-top: 3px; font-size: 21px; font-weight: 400; letter-spacing: -0.022em; color: var(--muted);}
.award {display: flex; align-items: center; height: 122px;}
.award svg {width: 28px; height: 34px; margin: 0 34px 0 14px;}
.award p {flex: 1;}
.award b, .award span, .award small {display: block; height: 32px; line-height: 33px; font-size: 21px;}
.award span {height: 37px; line-height: 37px; font-size: 26px; color: var(--text);}
.award small {line-height: 30px; letter-spacing: -0.018em; color: var(--muted);}
.award b {font-size: 22px; font-weight: 600;}
.award b i {margin-left: 18px; font-weight: 500;}
.award em {font-size: 24px; font-weight: 500; padding-right: 2px; letter-spacing: -0.005em;}
.gold b, .gold svg {color: #fdd91c;}
.silver b, .silver svg {color: #b0b0b0;}
.bronze b, .bronze svg {color: #fb9235;}
.results .scroll {height: 1066px; margin: -26px 0 0 auto;}
.results .scroll i {height: 728px;}
.awards > .tag {right: 27px; bottom: 22px; z-index: 1;}
```
